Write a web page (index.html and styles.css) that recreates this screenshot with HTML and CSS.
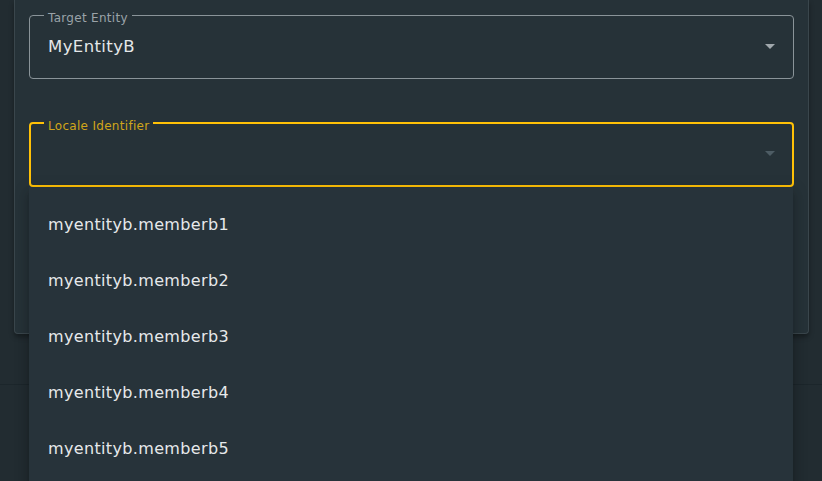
FILE: index.html
```html
<!DOCTYPE html>
<html>
<head>
<meta charset="utf-8">
<link rel="stylesheet" href="styles.css">
</head>
<body>
<div class="page">
  <div class="card">
    <fieldset class="field">
      <legend class="label">Target Entity</legend>
      <div class="row">
        <span class="value">MyEntityB</span>
        <span class="arrow"></span>
      </div>
    </fieldset>
    <fieldset class="field focused">
      <legend class="label">Locale Identifier</legend>
      <div class="row">
        <span class="value"></span>
        <span class="arrow dim"></span>
      </div>
    </fieldset>
  </div>
  <div class="divider"></div>
  <ul class="menu">
    <li>myentityb.memberb1</li>
    <li>myentityb.memberb2</li>
    <li>myentityb.memberb3</li>
    <li>myentityb.memberb4</li>
    <li>myentityb.memberb5</li>
  </ul>
</div>
</body>
</html>
```

FILE: styles.css
```css
html, body {
  margin: 0;
  padding: 0;
  height: 100%;
  overflow: hidden;
}
body {
  background: #222c31;
  font-family: "DejaVu Sans", sans-serif;
}
.page {
  position: relative;
  height: 481px;
}
.card {
  margin: 0 13px 0 14px;
  height: 334px;
  box-sizing: border-box;
  background: #263238;
  border: 1px solid #3a464c;
  border-top: none;
  border-radius: 0 0 4px 4px;
  box-shadow: 0 3px 5px rgba(0, 0, 0, 0.35);
  padding: 5px 14px 0 14px;
}
.field {
  margin: 0;
  padding: 0 18px 0 14px;
  border: 1px solid #8a9499;
  border-radius: 4px;
  height: 74px;
  box-sizing: border-box;
  min-width: 0;
}
.field + .field {
  margin-top: 34px;
}
.label {
  padding: 6px 4px 0 4px;
  font-size: 12px;
  line-height: 14px;
  letter-spacing: 0.3px;
  color: #9aa3a8;
}
.row {
  display: flex;
  align-items: center;
  justify-content: space-between;
  height: 40px;
  padding-left: 4px;
}
.value {
  font-size: 16.5px;
  line-height: 20px;
  letter-spacing: 0.4px;
  color: #e4e7e8;
  margin-top: 3px;
}
.arrow {
  width: 0;
  height: 0;
  border-left: 5px solid transparent;
  border-right: 5px solid transparent;
  border-top: 5px solid #a0a8ac;
  margin-top: 2px;
}
.arrow.dim {
  border-top-color: #4d5c64;
}
.focused {
  border: 2px solid #ffc107;
  padding: 0 17px 0 13px;
}
.focused .label {
  color: #d0a51a;
}
.focused .row {
  height: 39px;
}
.divider {
  margin-top: 50px;
  border-top: 1px solid #1c262b;
}
.menu {
  position: absolute;
  left: 29px;
  top: 187px;
  width: 764px;
  bottom: -10px;
  margin: 0;
  padding: 9px 0 0 0;
  list-style: none;
  background: #27333a;
  box-shadow: 0 5px 5px -3px rgba(0,0,0,0.2), 0 8px 10px 1px rgba(0,0,0,0.14), 0 3px 14px 2px rgba(0,0,0,0.12);
}
.menu li {
  height: 56px;
  display: flex;
  align-items: center;
  padding-left: 19px;
  font-size: 16px;
  letter-spacing: 0.35px;
  color: #e6e9ea;
}
```
